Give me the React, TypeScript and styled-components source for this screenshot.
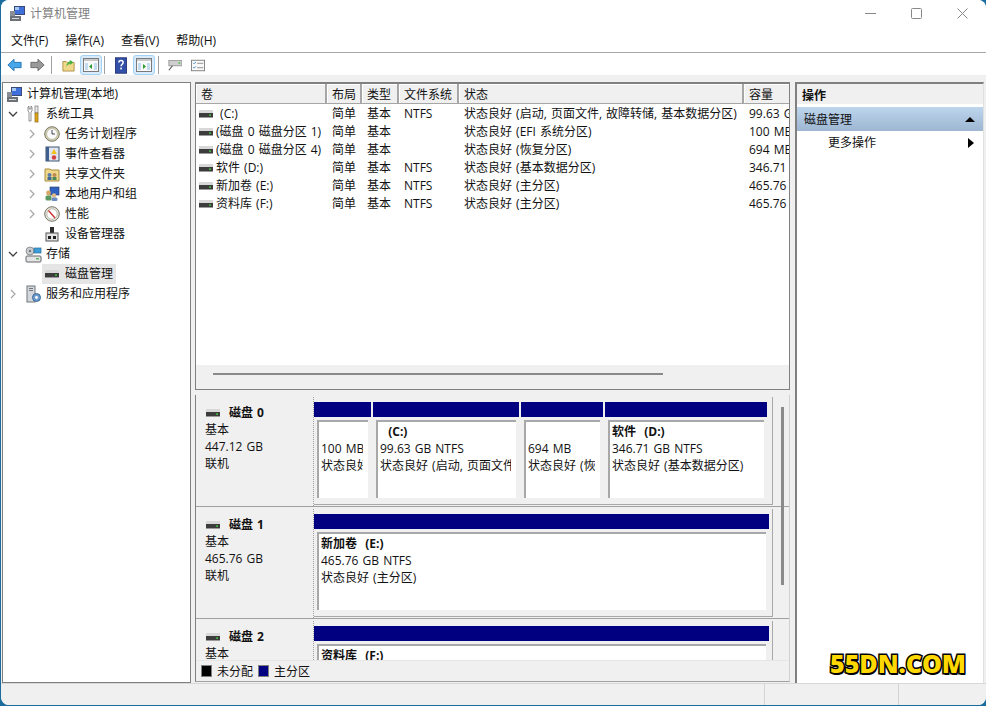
import React from 'react';
import styled, { createGlobalStyle } from 'styled-components';

const GlobalStyle = createGlobalStyle`
    html, body {
        margin: 0;
        height: 100%;
        background: #1b6d9e;
        overflow: hidden;
    }
    body {
        font-family: "Open Sans", "Noto Sans CJK SC", sans-serif;
        font-size: 12px;
        word-spacing: 1px;
        color: #111;
    }
`;

const DriveIcon = ({ size = 16 }: { size?: number }) => (
    <svg width={size} height={size} viewBox="0 0 16 16">
        <rect x="1" y="4" width="14" height="3" fill="#d8d8d8" />
        <rect x="1" y="7" width="14" height="4" fill="#3c3c3c" />
        <rect x="1" y="11" width="14" height="1" fill="#9a9a9a" />
        <rect x="11" y="8.5" width="2" height="1.2" fill="#3fdc3f" />
    </svg>
);

const ComputerIcon = () => (
    <svg width="17" height="17" viewBox="0 0 17 17">
        <rect x="5" y="1" width="11" height="9" fill="#3a4a78" />
        <rect x="6" y="2" width="9" height="7" fill="#3f6fd8" />
        <rect x="6" y="2" width="4" height="3" fill="#a8c8f4" />
        <rect x="1" y="6" width="5" height="10" fill="#8a8f96" />
        <rect x="1" y="11" width="11" height="5" fill="#6d7278" />
        <rect x="3" y="13" width="7" height="1" fill="#d8dade" />
    </svg>
);

const ToolsIcon = () => (
    <svg width="16" height="18" viewBox="0 0 16 18">
        <path d="M3 2v4l1 1v9h2V7l1-1V2L6 1v3H4V1z" fill="#fff" stroke="#777" strokeWidth="0.8" />
        <rect x="10" y="1" width="3" height="7" fill="#e8e8e8" stroke="#777" strokeWidth="0.7" />
        <rect x="10" y="8" width="3" height="9" fill="#e0a818" stroke="#8a6410" strokeWidth="0.7" />
    </svg>
);

const ClockIcon = () => (
    <svg width="16" height="16" viewBox="0 0 16 16">
        <circle cx="8" cy="8" r="7.3" fill="#d4cfa8" stroke="#77776a" />
        <circle cx="8" cy="8" r="5.4" fill="#fafafa" stroke="#a8a8a0" strokeWidth="0.6" />
        <path d="M8 4v4h3" fill="none" stroke="#445" strokeWidth="1" />
    </svg>
);

const LogIcon = () => (
    <svg width="16" height="16" viewBox="0 0 16 16">
        <rect x="2" y="1" width="13" height="14" fill="#dfe6f2" stroke="#3f5573" />
        <rect x="2" y="1" width="3" height="14" fill="#3f5f8c" />
        <path d="M10 3l3 5H7z" fill="#f0c020" />
        <circle cx="10" cy="11.5" r="2.2" fill="#d84040" />
    </svg>
);

const ShareIcon = () => (
    <svg width="16" height="16" viewBox="0 0 16 16">
        <path d="M1 3h5l1 1h8v11H1z" fill="#f0d78a" stroke="#a88c40" />
        <circle cx="5.5" cy="9" r="2" fill="#5a7ca8" />
        <rect x="3.5" y="11" width="4" height="3" fill="#3e6a9a" />
        <circle cx="10.5" cy="9" r="2" fill="#c08a50" />
        <rect x="8.5" y="11" width="4" height="3" fill="#4a8a5a" />
    </svg>
);

const UsersIcon = () => (
    <svg width="16" height="16" viewBox="0 0 16 16">
        <rect x="6" y="1" width="9" height="8" fill="#2f62c0" stroke="#33476e" strokeWidth="0.7" />
        <circle cx="4.5" cy="7" r="2.4" fill="#d8a868" />
        <rect x="1.5" y="9.5" width="6" height="5" rx="1.5" fill="#5c9a60" />
        <circle cx="10" cy="9.5" r="2.2" fill="#e0b888" />
        <rect x="7.5" y="11.5" width="6" height="3.5" rx="1.5" fill="#6a8cc0" />
    </svg>
);

const GaugeIcon = () => (
    <svg width="16" height="16" viewBox="0 0 16 16">
        <circle cx="8" cy="8" r="7.3" fill="#e8e4d4" stroke="#77776a" />
        <circle cx="8" cy="8" r="5.2" fill="#fff" stroke="#999" strokeWidth="0.6" />
        <path d="M4.5 4.5L11 12" stroke="#d03030" strokeWidth="1.4" />
    </svg>
);

const DeviceIcon = () => (
    <svg width="16" height="16" viewBox="0 0 16 16">
        <rect x="6" y="1" width="4" height="6" fill="#2c2c2c" />
        <rect x="2" y="7" width="12" height="8" fill="#e4e4e4" stroke="#555" />
        <rect x="4" y="10" width="3" height="3" fill="#222" />
        <rect x="9" y="10" width="3" height="3" fill="#222" />
    </svg>
);

const StorageIcon = () => (
    <svg width="17" height="17" viewBox="0 0 17 17">
        <circle cx="5" cy="5" r="4" fill="#c8cdd2" stroke="#777" strokeWidth="0.7" />
        <circle cx="5" cy="5" r="1.2" fill="#777" />
        <rect x="9" y="2" width="7" height="5" fill="#3a9ed8" stroke="#2c6c98" strokeWidth="0.7" />
        <rect x="1" y="10" width="15" height="6" rx="1" fill="#e2e4e6" stroke="#666" />
        <rect x="11" y="12" width="3" height="1.4" fill="#55b455" />
    </svg>
);

const ServicesIcon = () => (
    <svg width="17" height="18" viewBox="0 0 17 18">
        <rect x="2" y="1" width="8" height="16" fill="#d4d8dc" stroke="#70767c" />
        <rect x="4" y="3" width="4" height="1" fill="#70767c" />
        <rect x="4" y="5" width="4" height="1" fill="#70767c" />
        <circle cx="11.5" cy="12.5" r="4" fill="#6b9ccc" stroke="#3d6a98" />
        <circle cx="11.5" cy="12.5" r="1.4" fill="#fff" />
    </svg>
);

const ChevronRight = () => (
    <svg width="8" height="10" viewBox="0 0 8 10">
        <path d="M2 1l4 4-4 4" fill="none" stroke="#a6a6a6" strokeWidth="1.2" />
    </svg>
);

const ChevronDown = () => (
    <svg width="10" height="8" viewBox="0 0 10 8">
        <path d="M1 2l4 4 4-4" fill="none" stroke="#404040" strokeWidth="1.3" />
    </svg>
);

const BackIcon = () => (
    <svg width="17" height="16" viewBox="0 0 17 16">
        <path d="M8 1.5L1 8l7 6.5V11h8V5H8z" fill="#4aa8ea" stroke="#1f6fb4" />
    </svg>
);

const ForwardIcon = () => (
    <svg width="17" height="16" viewBox="0 0 17 16">
        <path d="M9 1.5L16 8l-7 6.5V11H1V5h8z" fill="#9a9a9a" stroke="#666" />
    </svg>
);

const UpFolderIcon = () => (
    <svg width="15" height="16" viewBox="0 0 15 16">
        <path d="M1 4h4l1 1h8v10H1z" fill="#f0d88a" stroke="#a88c40" />
        <path d="M5 10c0-3 2-5 4-6V2l4 3-4 3V6c-1 1-3 2-4 4z" fill="#3fae3f" />
    </svg>
);

const PaneIcon = ({ side }: { side: 'left' | 'right' }) => (
    <svg width="16" height="14" viewBox="0 0 16 14">
        <rect x="0.5" y="0.5" width="15" height="13" fill="#f8f8f8" stroke="#7a7a7a" />
        <rect x="1" y="1" width="14" height="2" fill="#c8c8c8" />
        <rect x="2" y="5" width="3" height="7" fill="#c4dcf0" />
        <rect x="11" y="5" width="3" height="7" fill="#c4dcf0" />
        <path d={side === 'left' ? 'M9 6v5L6 8.5z' : 'M7 6v5l3-2.5z'} fill="#2a9a2a" />
    </svg>
);

const HelpIcon = () => (
    <svg width="14" height="19" viewBox="0 0 14 19">
        <rect x="0.5" y="0.5" width="13" height="18" fill="#3350a8" stroke="#1f2f70" />
        <path d="M4.5 6c0-3 5-3 5 0 0 2-2.4 2.2-2.4 4.4" fill="none" stroke="#fff" strokeWidth="1.7" />
        <rect x="6.1" y="12" width="2" height="2" fill="#fff" />
    </svg>
);

const ConnectIcon = () => (
    <svg width="16" height="14" viewBox="0 0 16 14">
        <rect x="1" y="2" width="15" height="6" fill="#cfcfcf" stroke="#777" strokeWidth="0.7" />
        <rect x="12" y="4" width="2" height="1.4" fill="#30c030" />
        <path d="M5 8l-4 5" stroke="#555" strokeWidth="1.2" />
    </svg>
);

const ListIcon = () => (
    <svg width="16" height="13" viewBox="0 0 16 13">
        <rect x="0.5" y="0.5" width="15" height="12" fill="#f8f8f8" stroke="#777" />
        <path d="M2.5 3.5l1 1 2-2M2.5 8.5l1 1 2-2" fill="none" stroke="#2a7ac0" strokeWidth="1" />
        <path d="M7 4h7M7 9h7" stroke="#888" strokeWidth="1" />
    </svg>
);

const Window = styled.div`
    position: relative;
    height: 705px;
    margin-left: 1px;
    display: flex;
    flex-direction: column;
    background: #f0f0f0;
    border-radius: 8px;
    overflow: hidden;
`;

const TitleBar = styled.div`
    height: 28px;
    box-sizing: border-box;
    padding: 0 1px 2px 8px;
    display: flex;
    align-items: center;
    gap: 4px;
    background: #fff;
`;

const TitleText = styled.span`
    color: #7f7f7f;
    font-size: 12px;
`;

const WindowButtons = styled.div`
    margin-left: auto;
    display: flex;
    align-items: center;
`;

const WindowButton = styled.div`
    width: 46px;
    height: 26px;
    display: flex;
    align-items: center;
    justify-content: center;
`;

const MenuBar = styled.div`
    height: 24px;
    display: flex;
    align-items: center;
    gap: 17px;
    padding-left: 10px;
    background: #fff;
    border-bottom: 1px solid #a8a8a8;
`;

const MenuItem = styled.span`
    font-size: 12px;
`;

const ToolBar = styled.div`
    height: 22px;
    box-sizing: border-box;
    display: flex;
    align-items: center;
    padding: 2px 0 0 5px;
    background: #fff;
`;

const ToolSep = styled.div<{ $l: number; $r: number }>`
    width: 1px;
    height: 18px;
    background: #a0a0a0;
    margin-left: ${(p) => p.$l}px;
    margin-right: ${(p) => p.$r}px;
`;

const ToolButton = styled.div<{ $active?: boolean; $w: number; $mr?: number }>`
    width: ${(p) => p.$w}px;
    height: 20px;
    margin-right: ${(p) => p.$mr ?? 0}px;
    display: flex;
    align-items: center;
    justify-content: center;
    box-sizing: border-box;
    border-radius: 3px;
    background: ${(p) => (p.$active ? '#d8ebfa' : 'transparent')};
    border: 1px solid ${(p) => (p.$active ? '#a6d2f4' : 'transparent')};
`;

const Body = styled.div`
    flex: 1;
    min-height: 0;
    display: flex;
    padding: 7px 1px 0 0;
    border-bottom: 1px solid #d8d8d8;
`;

const TreePane = styled.div`
    width: 188px;
    margin-right: 4px;
    margin-left: 1px;
    background: #fff;
    border: 1px solid #808080;
    padding-top: 1px;
`;

const TreeRow = styled.div<{ $pad: number }>`
    height: 20px;
    display: flex;
    align-items: center;
    padding-left: ${(p) => p.$pad}px;
    white-space: nowrap;
`;

const Twisty = styled.span`
    width: 18px;
    height: 20px;
    margin-left: -2px;
    margin-right: 2px;
    display: flex;
    align-items: center;
    justify-content: center;
    flex: none;
`;

const TreeItem = styled.span<{ $selected?: boolean }>`
    display: flex;
    align-items: center;
    height: 20px;
    ${(p) => (p.$selected ? 'background: #e5e5e5; margin-left: -1px; padding: 0 3px 0 1px;' : '')}
`;

const TreeIconBox = styled.span`
    width: 18px;
    display: flex;
    justify-content: center;
    flex: none;
`;

const TreeLabel = styled.span`
    margin-left: 4px;
    line-height: 20px;
`;

const CenterPane = styled.div`
    width: 595px;
    display: flex;
    flex-direction: column;
    margin-right: 5px;
    margin-bottom: 1px;
`;

const ListPane = styled.div`
    height: 308px;
    flex: none;
    display: flex;
    flex-direction: column;
    background: #fff;
    border: 1px solid #808080;
    border-top-width: 2px;
    box-sizing: border-box;
    overflow: hidden;
`;

const columns = '131px 35px 37px 60px 285px 48px';

const HeaderRow = styled.div`
    display: grid;
    grid-template-columns: ${columns};
    height: 20px;
    flex: none;
`;

const HeaderCell = styled.div`
    display: flex;
    align-items: center;
    padding-left: 5px;
    background: #f0f0f0;
    border-right: 2px solid #a6a6a6;
    border-bottom: 1px solid #a6a6a6;
    box-shadow: inset 1px 1px 0 #fff;
    overflow: hidden;
    white-space: nowrap;
`;

const VolumeList = styled.div`
    flex: 1;
    padding-top: 1px;
`;

const VolumeRow = styled.div`
    display: grid;
    grid-template-columns: ${columns};
    height: 18px;
    align-items: center;
`;

const VolumeCell = styled.div`
    padding-left: 5px;
    overflow: hidden;
    white-space: nowrap;
    line-height: 18px;
`;

const NameCell = styled.div`
    display: flex;
    align-items: center;
    gap: 2px;
    padding-left: 2px;
    overflow: hidden;
    white-space: nowrap;
    line-height: 18px;
`;

const NameText = styled.span`
    white-space: pre;
`;

const HScroll = styled.div`
    height: 17px;
    flex: none;
    display: flex;
    align-items: center;
    padding: 0 126px 4px 17px;
    background: #f0f0f0;
    border-bottom: 3px solid #f0f0f0;

    &::before {
        content: '';
        flex: 1;
        height: 2px;
        background: #8a8a8a;
    }
`;

const GraphPane = styled.div`
    flex: 1;
    min-height: 0;
    margin-top: 5px;
    display: flex;
    flex-direction: column;
    border-left: 1px solid #808080;
    border-right: 1px solid #d0d0d0;
    border-bottom: 1px solid #a0a0a0;
`;

const DiskScroller = styled.div`
    position: relative;
    flex: 1;
    min-height: 0;
    overflow: hidden;
    padding-top: 2px;
`;

const ScrollThumb = styled.div`
    position: absolute;
    right: 5px;
    top: 12px;
    width: 3px;
    height: 178px;
    background: #8a8a8a;
`;

const DiskRow = styled.div`
    height: 110px;
    margin-bottom: 2px;
    display: flex;
    border-bottom: 1px solid #a0a0a0;
    box-sizing: border-box;
    flex: none;
`;

const DiskInfo = styled.div`
    width: 118px;
    flex: none;
    padding: 7px 0 0 9px;
    box-sizing: border-box;
    line-height: 17px;
    border-right: 1px dotted #a0a0a0;
`;

const DiskName = styled.div`
    display: flex;
    align-items: center;
    gap: 8px;
    font-weight: 700;
`;

const Partitions = styled.div`
    display: flex;
    padding-top: 5px;
    height: 108px;
    box-sizing: border-box;
    width: 459px;
    border-right: 1px solid #a8a8a8;
    border-bottom: 1px solid #a8a8a8;
`;

const Partition = styled.div<{ $w: number }>`
    width: ${(p) => p.$w}px;
    flex: none;
    display: flex;
    flex-direction: column;
    box-sizing: border-box;
    margin-right: 2px;
`;

const PartBar = styled.div`
    height: 15px;
    flex: none;
    background: #000080;
`;

const PartBody = styled.div`
    flex: 1;
    margin: 3px 3px 6px 3px;
    padding: 1px 5px 0 2px;
    background: #fff;
    border-top: 2px solid #a8a8a8;
    border-left: 2px solid #a8a8a8;
`;

const PartText = styled.div`
    line-height: 17px;
    overflow: hidden;
    white-space: nowrap;
`;

const PartName = styled.div`
    font-weight: 700;
    height: 17px;
    white-space: pre;
`;

const Legend = styled.div`
    height: 20px;
    flex: none;
    display: flex;
    align-items: center;
    padding-left: 5px;
    background: #f0f0f0;
    border-top: 1px solid #e6e6e6;
`;

const Swatch = styled.span<{ $color: string }>`
    width: 11px;
    height: 12px;
    flex: none;
    background: ${(p) => p.$color};
    border: 1px solid #808080;
    box-sizing: border-box;
    margin-right: 5px;
`;

const LegendLabel = styled.span`
    margin-right: 5px;
    white-space: nowrap;
`;

const ActionPane = styled.div`
    width: 187px;
    background: #fff;
    border-left: 2px solid #808080;
    border-top: 2px solid #808080;
    border-right: 1px solid #e0e0e0;
    margin-right: 1px;
`;

const ActionHeader = styled.div`
    height: 20px;
    box-sizing: border-box;
    padding: 1px 0 0 5px;
    display: flex;
    align-items: center;
    font-weight: 700;
    background: #f0f0f0;
`;

const ActionSection = styled.div`
    height: 24px;
    margin-top: 3px;
    display: flex;
    align-items: center;
    justify-content: space-between;
    padding: 0 8px 0 7px;
    background: linear-gradient(#bdd5ec, #9db6d2);
`;

const ActionItem = styled.div`
    height: 20px;
    margin-top: 1px;
    display: flex;
    align-items: center;
    justify-content: space-between;
    padding: 0 9px 0 31px;
`;

const UpArrow = styled.span`
    width: 0;
    height: 0;
    border-left: 5px solid transparent;
    border-right: 5px solid transparent;
    border-bottom: 5px solid #000;
`;

const RightArrow = styled.span`
    width: 0;
    height: 0;
    margin-top: 1px;
    border-top: 5px solid transparent;
    border-bottom: 5px solid transparent;
    border-left: 6px solid #000;
`;

const StatusBar = styled.div`
    height: 21px;
    flex: none;
    display: flex;
    background: #f0f0f0;
`;

const StatusCell = styled.div<{ $w: number }>`
    width: ${(p) => p.$w}px;
    border-right: 1px solid #d4d4d4;
`;

const Watermark = styled.div`
    position: absolute;
    left: 829px;
    top: 646px;
    font-family: "Open Sans", sans-serif;
    font-size: 25px;
    font-weight: 800;
    color: #ffd800;
    -webkit-text-stroke: 3px #000;
    paint-order: stroke fill;
    text-shadow: 1px 2px 0 #000;
`;

const treeItems = [
    { pad: 2, twisty: 'none', icon: <ComputerIcon />, label: '计算机管理(本地)' },
    { pad: 3, twisty: 'down', icon: <ToolsIcon />, label: '系统工具' },
    { pad: 22, twisty: 'right', icon: <ClockIcon />, label: '任务计划程序' },
    { pad: 22, twisty: 'right', icon: <LogIcon />, label: '事件查看器' },
    { pad: 22, twisty: 'right', icon: <ShareIcon />, label: '共享文件夹' },
    { pad: 22, twisty: 'right', icon: <UsersIcon />, label: '本地用户和组' },
    { pad: 22, twisty: 'right', icon: <GaugeIcon />, label: '性能' },
    { pad: 22, twisty: 'blank', icon: <DeviceIcon />, label: '设备管理器' },
    { pad: 3, twisty: 'down', icon: <StorageIcon />, label: '存储' },
    { pad: 22, twisty: 'blank', icon: <DriveIcon />, label: '磁盘管理', selected: true },
    { pad: 3, twisty: 'right', icon: <ServicesIcon />, label: '服务和应用程序' },
];

const volumes = [
    { name: ' (C:)', fs: 'NTFS', status: '状态良好 (启动, 页面文件, 故障转储, 基本数据分区)', size: '99.63 GB' },
    { name: '(磁盘 0 磁盘分区 1)', fs: '', status: '状态良好 (EFI 系统分区)', size: '100 MB' },
    { name: '(磁盘 0 磁盘分区 4)', fs: '', status: '状态良好 (恢复分区)', size: '694 MB' },
    { name: '软件 (D:)', fs: 'NTFS', status: '状态良好 (基本数据分区)', size: '346.71 GB' },
    { name: '新加卷 (E:)', fs: 'NTFS', status: '状态良好 (主分区)', size: '465.76 GB' },
    { name: '资料库 (F:)', fs: 'NTFS', status: '状态良好 (主分区)', size: '465.76 GB' },
];

const disks = [
    {
        name: '磁盘 0',
        size: '447.12 GB',
        parts: [
            { w: 57, name: '', size: '100 MB', status: '状态良好 (EFI 系统分区)' },
            { w: 146, name: '  (C:)', size: '99.63 GB NTFS', status: '状态良好 (启动, 页面文件, 故障转储)' },
            { w: 82, name: '', size: '694 MB', status: '状态良好 (恢复分区)' },
            { w: 162, name: '软件  (D:)', size: '346.71 GB NTFS', status: '状态良好 (基本数据分区)' },
        ],
    },
    {
        name: '磁盘 1',
        size: '465.76 GB',
        parts: [{ w: 455, name: '新加卷  (E:)', size: '465.76 GB NTFS', status: '状态良好 (主分区)' }],
    },
    {
        name: '磁盘 2',
        size: '465.76 GB',
        parts: [{ w: 455, name: '资料库  (F:)', size: '465.76 GB NTFS', status: '状态良好 (主分区)' }],
    },
];

export default function App() {
    return (
        <>
            <GlobalStyle />
            <Window>
                <TitleBar>
                    <ComputerIcon />
                    <TitleText>计算机管理</TitleText>
                    <WindowButtons>
                        <WindowButton>
                            <svg width="11" height="11" viewBox="0 0 11 11">
                                <path d="M0 5.5h11" stroke="#888" />
                            </svg>
                        </WindowButton>
                        <WindowButton>
                            <svg width="11" height="11" viewBox="0 0 11 11">
                                <rect x="0.5" y="0.5" width="10" height="10" rx="1" fill="none" stroke="#888" />
                            </svg>
                        </WindowButton>
                        <WindowButton>
                            <svg width="11" height="11" viewBox="0 0 11 11">
                                <path d="M0.5 0.5l10 10M10.5 0.5l-10 10" stroke="#888" />
                            </svg>
                        </WindowButton>
                    </WindowButtons>
                </TitleBar>
                <MenuBar>
                    <MenuItem>文件(F)</MenuItem>
                    <MenuItem>操作(A)</MenuItem>
                    <MenuItem>查看(V)</MenuItem>
                    <MenuItem>帮助(H)</MenuItem>
                </MenuBar>
                <ToolBar>
                    <ToolButton $w={17} $mr={6}><BackIcon /></ToolButton>
                    <ToolButton $w={17}><ForwardIcon /></ToolButton>
                    <ToolSep $l={5} $r={9} />
                    <ToolButton $w={15} $mr={4}><UpFolderIcon /></ToolButton>
                    <ToolButton $w={22} $active><PaneIcon side="left" /></ToolButton>
                    <ToolSep $l={2} $r={9} />
                    <ToolButton $w={14} $mr={5}><HelpIcon /></ToolButton>
                    <ToolButton $w={22} $active><PaneIcon side="right" /></ToolButton>
                    <ToolSep $l={3} $r={8} />
                    <ToolButton $w={16} $mr={7}><ConnectIcon /></ToolButton>
                    <ToolButton $w={16}><ListIcon /></ToolButton>
                </ToolBar>
                <Body>
                    <TreePane>
                        {treeItems.map((item) => (
                            <TreeRow key={item.label} $pad={item.pad}>
                                {item.twisty !== 'none' && (
                                    <Twisty>
                                        {item.twisty === 'down' && <ChevronDown />}
                                        {item.twisty === 'right' && <ChevronRight />}
                                    </Twisty>
                                )}
                                <TreeItem $selected={item.selected}>
                                    <TreeIconBox>{item.icon}</TreeIconBox>
                                    <TreeLabel>{item.label}</TreeLabel>
                                </TreeItem>
                            </TreeRow>
                        ))}
                    </TreePane>
                    <CenterPane>
                        <ListPane>
                            <HeaderRow>
                                <HeaderCell>卷</HeaderCell>
                                <HeaderCell>布局</HeaderCell>
                                <HeaderCell>类型</HeaderCell>
                                <HeaderCell>文件系统</HeaderCell>
                                <HeaderCell>状态</HeaderCell>
                                <HeaderCell>容量</HeaderCell>
                            </HeaderRow>
                            <VolumeList>
                                {volumes.map((v) => (
                                    <VolumeRow key={v.name}>
                                        <NameCell>
                                            <DriveIcon />
                                            <NameText>{v.name}</NameText>
                                        </NameCell>
                                        <VolumeCell>简单</VolumeCell>
                                        <VolumeCell>基本</VolumeCell>
                                        <VolumeCell>{v.fs}</VolumeCell>
                                        <VolumeCell>{v.status}</VolumeCell>
                                        <VolumeCell>{v.size}</VolumeCell>
                                    </VolumeRow>
                                ))}
                            </VolumeList>
                            <HScroll />
                        </ListPane>
                        <GraphPane>
                            <DiskScroller>
                                {disks.map((d) => (
                                    <DiskRow key={d.name}>
                                        <DiskInfo>
                                            <DiskName>
                                                <DriveIcon />
                                                {d.name}
                                            </DiskName>
                                            <div>基本</div>
                                            <div>{d.size}</div>
                                            <div>联机</div>
                                        </DiskInfo>
                                        <Partitions>
                                            {d.parts.map((p) => (
                                                <Partition key={p.status} $w={p.w}>
                                                    <PartBar />
                                                    <PartBody>
                                                        <PartText>
                                                            <PartName>{p.name}</PartName>
                                                            <div>{p.size}</div>
                                                            <div>{p.status}</div>
                                                        </PartText>
                                                    </PartBody>
                                                </Partition>
                                            ))}
                                        </Partitions>
                                    </DiskRow>
                                ))}
                                <ScrollThumb />
                            </DiskScroller>
                            <Legend>
                                <Swatch $color="#000" />
                                <LegendLabel>未分配</LegendLabel>
                                <Swatch $color="#000080" />
                                <LegendLabel>主分区</LegendLabel>
                            </Legend>
                        </GraphPane>
                    </CenterPane>
                    <ActionPane>
                        <ActionHeader>操作</ActionHeader>
                        <ActionSection>
                            磁盘管理
                            <UpArrow />
                        </ActionSection>
                        <ActionItem>
                            更多操作
                            <RightArrow />
                        </ActionItem>
                    </ActionPane>
                </Body>
                <StatusBar>
                    <StatusCell $w={763} />
                    <StatusCell $w={133} />
                </StatusBar>
                <Watermark>55DN.COM</Watermark>
            </Window>
        </>
    );
}
